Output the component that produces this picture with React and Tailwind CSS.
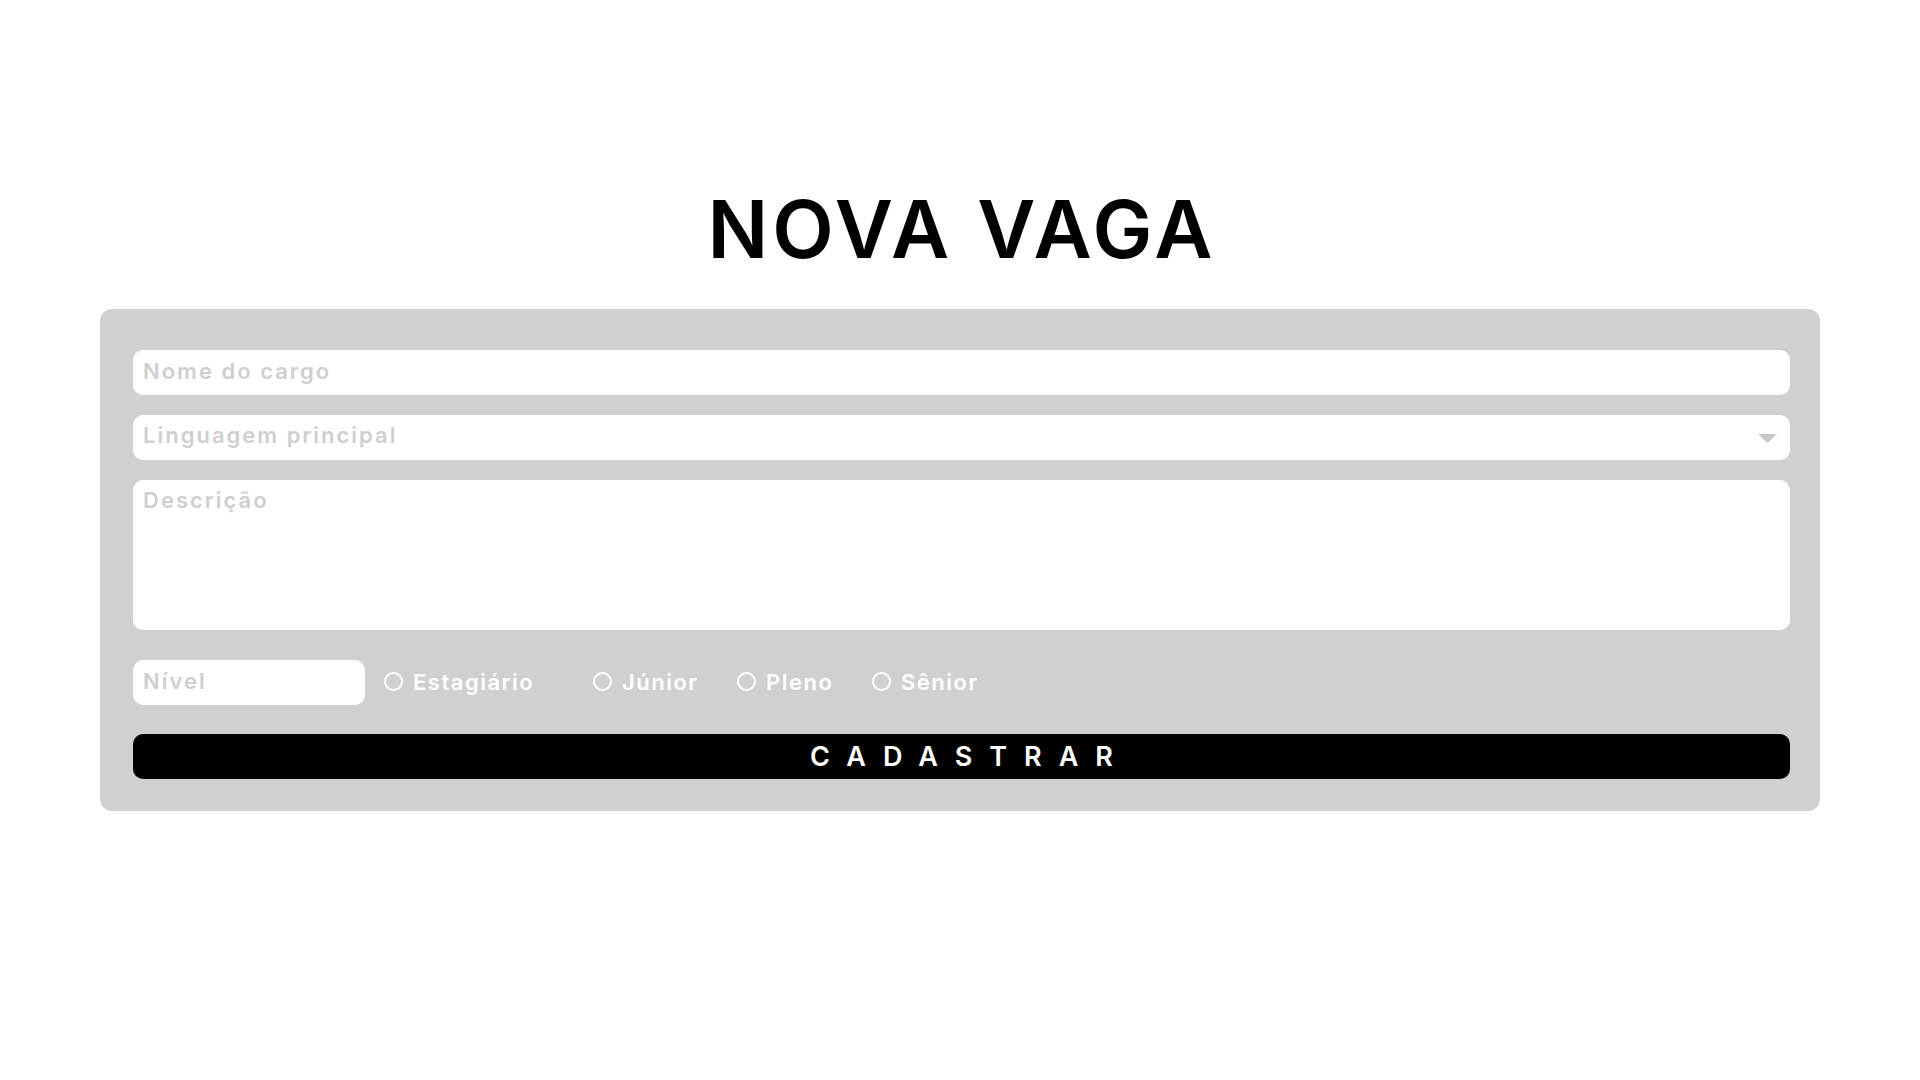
import React from "react";

const font = { fontFamily: "Inter, 'Noto Sans', sans-serif" };

function Radio({ label, w }) {
  return (
    <label className={`flex items-center gap-[10px] ${w}`}>
      <span className="w-[19px] h-[19px] rounded-full border-2 border-white shrink-0" />
      <span className="text-white text-[22px] font-semibold leading-none tracking-[1.5px]">{label}</span>
    </label>
  );
}

export default function App() {
  return (
    <div className="min-h-screen bg-white flex flex-col items-center" style={font}>
      <h1 className="mt-[189px] pl-[4px] text-[80px] leading-none font-semibold tracking-[4px] text-black">
        NOVA VAGA
      </h1>
      <div className="mt-[40px] w-[1720px] bg-[#d0d0d0] rounded-[12px] pl-[33px] pr-[30px] pt-[41px] pb-[32px] flex flex-col">
        <input
          className="h-[45px] w-full bg-white rounded-[10px] px-[10px] pb-[4px] text-[22px] font-semibold tracking-[2px] outline-none placeholder:text-[#cfcfcf]"
          placeholder="Nome do cargo"
        />
        <div className="relative mt-[20px] h-[45px]">
          <select
            className="appearance-none h-[45px] w-full bg-white rounded-[10px] px-[10px] pb-[4px] text-[22px] font-semibold tracking-[2px] outline-none text-[#cfcfcf]"
            defaultValue=""
          >
            <option value="" disabled>
              Linguagem principal
            </option>
          </select>
          <svg
            className="absolute right-[13px] top-[19px] pointer-events-none"
            width="19"
            height="9"
            viewBox="0 0 19 9"
          >
            <polygon points="0,0 19,0 9.5,9" fill="#c8c8c8" />
          </svg>
        </div>
        <textarea
          className="mt-[20px] h-[150px] w-full bg-white rounded-[10px] px-[10px] pt-[4px] text-[22px] font-semibold tracking-[2px] outline-none resize-none placeholder:text-[#cfcfcf]"
          placeholder="Descrição"
        />
        <div className="mt-[30px] h-[45px] flex items-center">
          <input
            className="h-[45px] w-[232px] bg-white rounded-[10px] px-[10px] pb-[4px] text-[22px] font-semibold tracking-[2px] outline-none placeholder:text-[#cfcfcf]"
            placeholder="Nível"
          />
          <div className="ml-[19px] pb-[2px] flex items-center">
            <Radio label="Estagiário" w="w-[209px]" />
            <Radio label="Júnior" w="w-[144px]" />
            <Radio label="Pleno" w="w-[135px]" />
            <Radio label="Sênior" w="w-[140px]" />
          </div>
        </div>
        <button className="mt-[29px] h-[45px] w-full bg-black rounded-[10px] text-white text-[27px] font-semibold tracking-[17px] pl-[17px] leading-none">
          CADASTRAR
        </button>
      </div>
    </div>
  );
}
